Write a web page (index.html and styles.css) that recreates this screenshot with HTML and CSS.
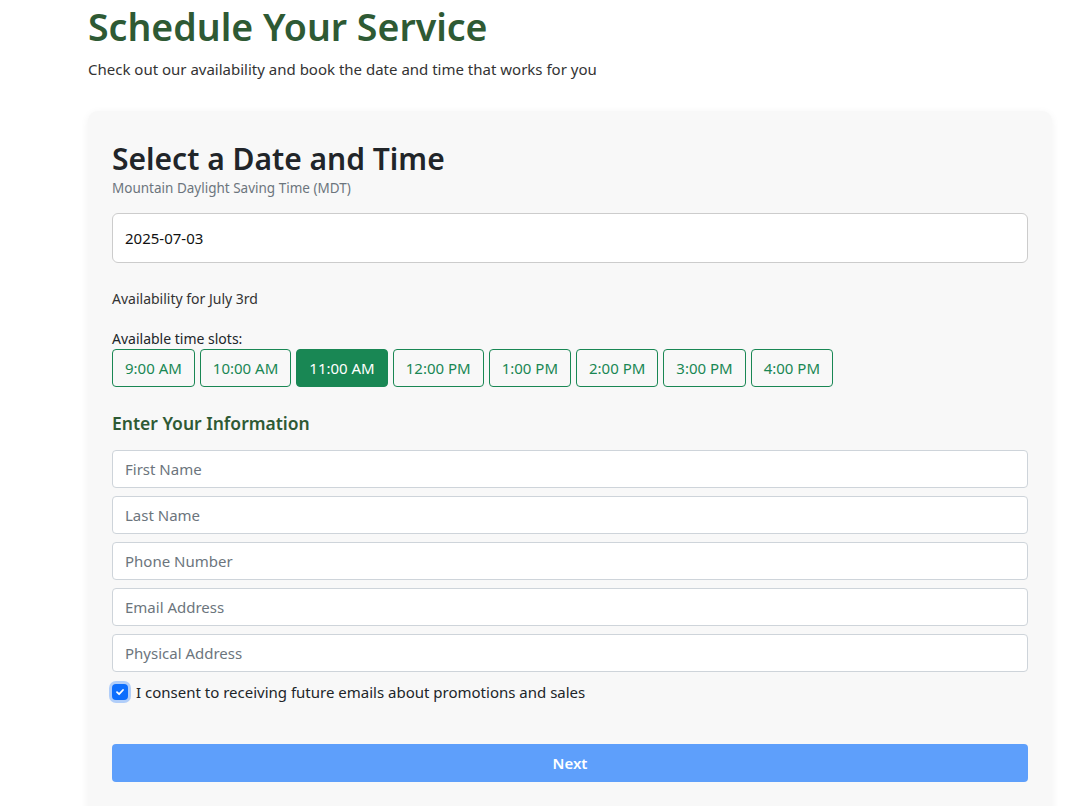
FILE: index.html
```html
<!DOCTYPE html>
<html lang="en">
<head>
<meta charset="utf-8">
<title>Schedule Your Service</title>
<link rel="stylesheet" href="styles.css">
</head>
<body>
<main class="page">
  <header class="intro">
    <h1 class="title">Schedule Your Service</h1>
    <p class="lead">Check out our availability and book the date and time that works for you</p>
  </header>
  <section class="card">
    <h2 class="card-title">Select a Date and Time</h2>
    <div class="tz">Mountain Daylight Saving Time (MDT)</div>
    <div class="date-field">2025-07-03</div>
    <p class="avail">Availability for July 3rd</p>
    <div class="slots-label">Available time slots:</div>
    <div class="slots">
      <button class="slot">9:00 AM</button>
      <button class="slot">10:00 AM</button>
      <button class="slot active">11:00 AM</button>
      <button class="slot">12:00 PM</button>
      <button class="slot">1:00 PM</button>
      <button class="slot">2:00 PM</button>
      <button class="slot">3:00 PM</button>
      <button class="slot">4:00 PM</button>
    </div>
    <h3 class="info-title">Enter Your Information</h3>
    <div class="fields">
      <input class="field" type="text" placeholder="First Name">
      <input class="field" type="text" placeholder="Last Name">
      <input class="field" type="text" placeholder="Phone Number">
      <input class="field" type="text" placeholder="Email Address">
      <input class="field" type="text" placeholder="Physical Address">
    </div>
    <label class="consent">
      <span class="check"><svg width="10" height="10" viewBox="0 0 10 10"><path d="M2 5.2 L4.1 7.2 L8 3" fill="none" stroke="#fff" stroke-width="1.8" stroke-linecap="round" stroke-linejoin="round"/></svg></span>
      <span>I consent to receiving future emails about promotions and sales</span>
    </label>
    <button class="next" disabled>Next</button>
  </section>
</main>
</body>
</html>
```
FILE: styles.css
```css
* { box-sizing: border-box; }
html, body { margin: 0; padding: 0; background: #fff; }
body {
  font-family: "Noto Sans", "Open Sans", "DejaVu Sans", sans-serif;
  color: #212529;
}
.page {
  width: 964px;
  margin-left: 88px;
}
.intro { padding-top: 0; }
.title {
  margin: 0;
  padding-top: 3px;
  font-size: 37.5px;
  font-weight: 600;
  line-height: 48px;
  color: #2e5a34;
}
.lead {
  margin: 7px 0 0;
  font-size: 15px;
  line-height: 22px;
  color: #333;
}
.card {
  margin-top: 31px;
  background: #f8f8f8;
  border-radius: 10px;
  box-shadow: 0 2px 8px rgba(0,0,0,0.06);
  padding: 29px 24px 40px;
}
.card-title {
  margin: 0;
  font-size: 30px;
  font-weight: 600;
  line-height: 38px;
  color: #212529;
}
.tz {
  font-size: 13.5px;
  line-height: 18px;
  color: #6c757d;
  margin-top: 1px;
}
.date-field {
  margin-top: 16px;
  height: 50px;
  background: #fff;
  border: 1px solid #ccc;
  border-radius: 6px;
  padding: 0 12px;
  display: flex;
  align-items: center;
  font-size: 15px;
  color: #111;
}
.avail {
  margin: 26px 0 0;
  font-size: 14px;
  line-height: 20px;
  color: #333;
}
.slots-label {
  margin-top: 21px;
  font-size: 14px;
  line-height: 18px;
  color: #212529;
}
.slots {
  display: flex;
  flex-wrap: wrap;
  gap: 5px;
  margin-top: 1px;
}
.slot {
  height: 38px;
  padding: 0 12px;
  background: transparent;
  border: 1px solid #198754;
  border-radius: 4px;
  color: #198754;
  font-family: inherit;
  font-size: 15px;
}
.slot.active {
  background: #198754;
  color: #fff;
}
.info-title {
  margin: 23px 0 0;
  font-size: 17.5px;
  font-weight: 600;
  line-height: 26px;
  color: #2e5a34;
}
.fields {
  margin-top: 14px;
  display: flex;
  flex-direction: column;
  gap: 8px;
}
.field {
  height: 38px;
  width: 100%;
  background: #fff;
  border: 1px solid #ced4da;
  border-radius: 4px;
  padding: 0 12px;
  font-family: inherit;
  font-size: 15px;
  color: #212529;
}
.field::placeholder { color: #6c757d; }
.consent {
  margin-top: 10px;
  display: flex;
  align-items: center;
  gap: 8px;
  font-size: 15px;
  line-height: 20px;
  color: #212529;
}
.check {
  width: 16px;
  height: 16px;
  border-radius: 4px;
  background: #0d6efd;
  box-shadow: 0 0 0 3px rgba(13,110,253,0.3);
  display: flex;
  align-items: center;
  justify-content: center;
}
.next {
  display: block;
  width: 100%;
  margin-top: 42px;
  height: 38px;
  border: none;
  border-radius: 4px;
  background: #5e9ffb;
  color: #fff;
  font-family: inherit;
  font-size: 15px;
  font-weight: 600;
}
```
